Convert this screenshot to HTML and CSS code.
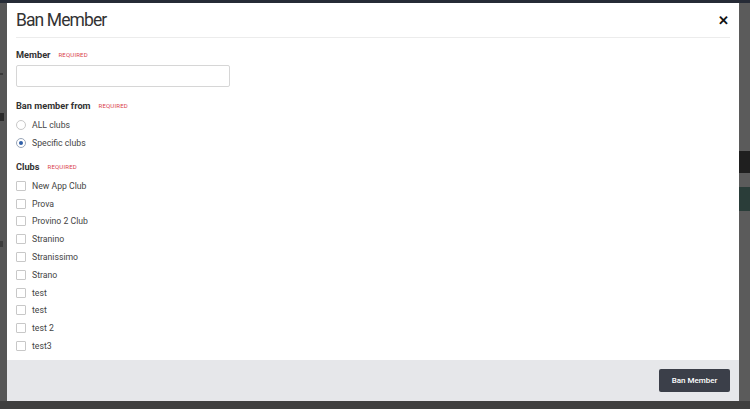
FILE: index.html
```html
<!DOCTYPE html>
<html>
<head>
<meta charset="utf-8">
<link rel="stylesheet" href="styles.css">
</head>
<body>
<div class="page-top"></div>
<div class="backdrop">
  <div class="side-left">
    <div class="ghost g1"></div>
    <div class="ghost g2"></div>
    <div class="ghost g3"></div>
  </div>
  <div class="modal">
    <div class="modal-header">
      <h1 class="modal-title">Ban Member</h1>
      <span class="close">&#x2715;</span>
    </div>
    <div class="modal-body">
      <div class="field-label">Member <span class="req">REQUIRED</span></div>
      <div class="text-input"></div>

      <div class="field-label mt">Ban member from <span class="req">REQUIRED</span></div>
      <div class="options">
        <div class="option"><span class="radio"></span>ALL clubs</div>
        <div class="option"><span class="radio checked"></span>Specific clubs</div>
      </div>

      <div class="field-label mt2">Clubs <span class="req">REQUIRED</span></div>
      <div class="options clubs">
        <div class="option"><span class="check"></span>New App Club</div>
        <div class="option"><span class="check"></span>Prova</div>
        <div class="option"><span class="check"></span>Provino 2 Club</div>
        <div class="option"><span class="check"></span>Stranino</div>
        <div class="option"><span class="check"></span>Stranissimo</div>
        <div class="option"><span class="check"></span>Strano</div>
        <div class="option"><span class="check"></span>test</div>
        <div class="option"><span class="check"></span>test</div>
        <div class="option"><span class="check"></span>test 2</div>
        <div class="option"><span class="check"></span>test3</div>
      </div>
    </div>
    <div class="modal-footer">
      <button class="btn">Ban Member</button>
    </div>
  </div>
  <div class="side-right">
    <div class="sr-dark"></div>
    <div class="sr-teal"></div>
  </div>
</div>
<div class="page-bottom"></div>
</body>
</html>
```
FILE: styles.css
```css
html, body {
  margin: 0;
  padding: 0;
}
body {
  width: 750px;
  height: 409px;
  overflow: hidden;
  background: #555555;
  font-family: Roboto, "Liberation Sans", sans-serif;
  display: flex;
  flex-direction: column;
}
.page-top {
  height: 3px;
  background: #262b36;
  flex: none;
}
.backdrop {
  display: flex;
  height: 398px;
  flex: none;
}
.side-left {
  width: 7px;
  background: #565656;
  display: flex;
  flex-direction: column;
}
.ghost {
  width: 3px;
  height: 2px;
  background: #3a3a3a;
}
.g1 { margin-top: 70px; }
.g2 { margin-top: 38px; height: 8px; width: 4px; background: #2a2a2a; }
.g3 { margin-top: 120px; height: 6px; background: #3c3c3c; }
.side-right {
  width: 11px;
  background: #5b5b5b;
  display: flex;
  flex-direction: column;
}
.sr-dark {
  margin-top: 148px;
  height: 22px;
  background: #1f1f1f;
}
.sr-teal {
  margin-top: 14px;
  height: 24px;
  background: #2a3d39;
}
.page-bottom {
  flex: 1;
  background: #3f3f3f;
}
.modal {
  width: 732px;
  background: #ffffff;
  display: flex;
  flex-direction: column;
}
.modal-header {
  margin: 0 9px;
  height: 34px;
  border-bottom: 1px solid #ececec;
  display: flex;
  align-items: center;
  justify-content: space-between;
}
.modal-title {
  margin: 0;
  font-size: 17.5px;
  font-weight: 400;
  color: #333333;
  letter-spacing: -0.9px;
}
.close {
  font-size: 13px;
  font-weight: 700;
  color: #111111;
  margin-right: 1px;
}
.modal-body {
  flex: 1;
  padding: 11px 9px 0;
  display: flex;
  flex-direction: column;
  align-items: flex-start;
}
.field-label {
  font-size: 9.2px;
  font-weight: 700;
  color: #333333;
  line-height: 12px;
  display: flex;
  align-items: center;
}
.req {
  font-size: 6px;
  font-weight: 400;
  color: #d9404a;
  margin-left: 8px;
  letter-spacing: 0.2px;
}
.text-input {
  margin-top: 4px;
  width: 212px;
  height: 20px;
  border: 1px solid #d6d6d6;
  border-radius: 2px;
}
.mt { margin-top: 13px; }
.mt2 { margin-top: 9px; }
.options {
  margin-top: 4px;
  display: flex;
  flex-direction: column;
}
.option {
  height: 18px;
  display: flex;
  align-items: center;
  font-size: 8.7px;
  color: #444444;
}
.clubs .option { height: 17.8px; }
.radio {
  width: 8px;
  height: 8px;
  border: 1px solid #c8c8c8;
  border-radius: 50%;
  margin-right: 6px;
  box-sizing: content-box;
  display: flex;
  align-items: center;
  justify-content: center;
}
.radio.checked {
  border-color: #9aa6b8;
}
.radio.checked::after {
  content: "";
  width: 4px;
  height: 4px;
  border-radius: 50%;
  background: #2f5fa8;
}
.check {
  width: 8px;
  height: 8px;
  border: 1px solid #c8c8c8;
  border-radius: 1px;
  margin-right: 6px;
}
.modal-footer {
  height: 41px;
  background: #e6e7ea;
  display: flex;
  align-items: center;
  justify-content: flex-end;
  padding: 0 9px;
}
.btn {
  width: 71px;
  height: 23px;
  border: none;
  border-radius: 2px;
  background: #3b3f49;
  color: #ffffff;
  font-family: Roboto, "Liberation Sans", sans-serif;
  font-size: 8px;
  font-weight: 500;
  padding: 0;
}
```
